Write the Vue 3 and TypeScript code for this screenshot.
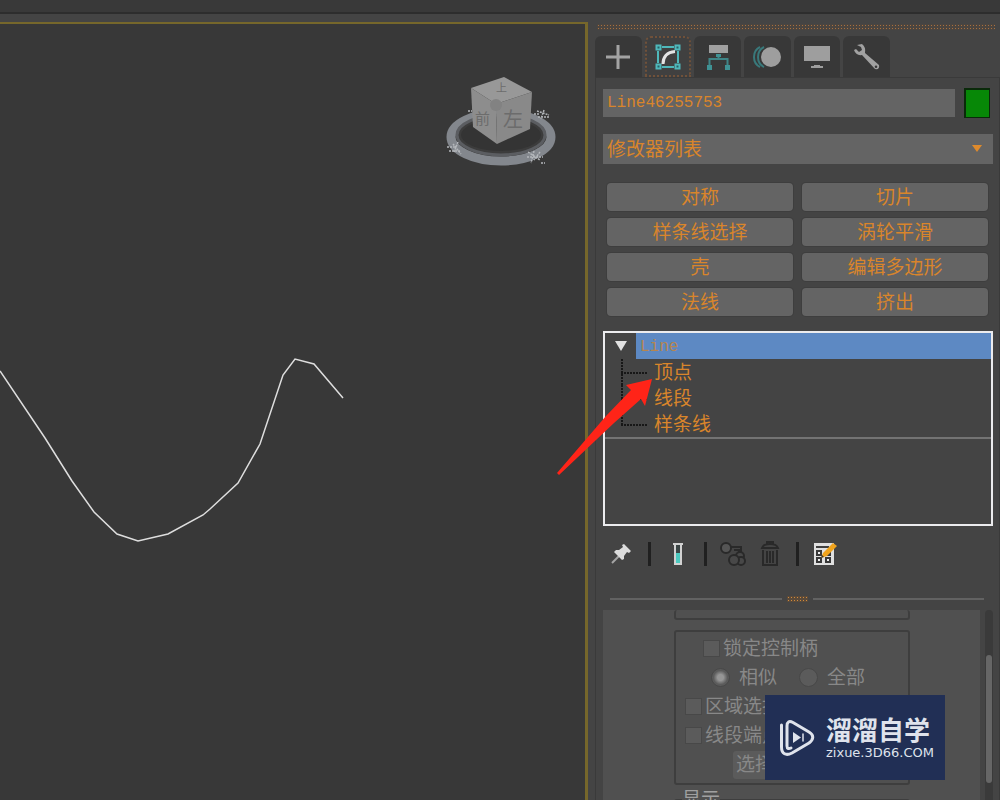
<script setup lang="ts">
import { ref } from 'vue'

const objectName = ref('Line46255753')
const activeTab = ref('modify')
const lockHandles = ref(false)
const areaSelect = ref(false)
const segmentEnd = ref(false)
const handleMode = ref('alike')

const tabs = [
  { id: 'create', label: '创建' },
  { id: 'modify', label: '修改' },
  { id: 'hierarchy', label: '层次' },
  { id: 'motion', label: '运动' },
  { id: 'display', label: '显示' },
  { id: 'utilities', label: '实用程序' },
]
const modifiers = ['对称', '切片', '样条线选择', '涡轮平滑', '壳', '编辑多边形', '法线', '挤出']
const subObjects = ['顶点', '线段', '样条线']
</script>

<template>
  <div class="app">
    <div class="topbar"></div>
    <div class="workspace">
      <main class="viewport">
        <svg class="scene" width="585" height="776" viewBox="0 24 585 776" aria-hidden="true">
          <polyline
            points="0,371 45,438 72,481 94,512 117,534 138,541 168,534 203,515 210,509 238,483 260,444 283,375 295,359 314,364 343,398"
            fill="none" stroke="#dedede" stroke-width="1.5" />
          <ellipse cx="501" cy="137" rx="50" ry="24" fill="none" stroke="#83878d" stroke-width="9" />
          <ellipse cx="501" cy="135" rx="44" ry="20" fill="#3c3c3c" stroke="#5b5d61" stroke-width="3" />
          <ellipse cx="501" cy="135" rx="40" ry="16" fill="#343434" />
          <path d="M471 88L504 77L532 92L496 104Z" fill="#989898" />
          <path d="M471 88L496 104L497 144L473 127Z" fill="#8d8d8d" />
          <path d="M496 104L532 92L530 129L497 144Z" fill="#898989" />
          <circle cx="496" cy="105" r="6" fill="#828282" />
          <text x="496" y="92" class="face small">上</text>
          <text x="475" y="124" class="face">前</text>
          <text x="503" y="127" class="face big">左</text>
          <g stroke="#b4b7bb" stroke-width="1.5" stroke-dasharray="2 1" fill="none">
            <path d="M447 147h8M449 151h12M453 144l8 10M458 142l-4 10M468 111h4" />
            <path d="M528 152l12 8M527 157h16M534 151l-3 12M540 152l-6 8M541 163h4" />
            <path d="M537 111l12 4M538 117h12M544 110l-3 9M534 114h6" />
          </g>
        </svg>
      </main>

      <aside class="panel">
        <div class="grip"></div>
        <nav class="tabs">
          <button v-for="tab in tabs" :key="tab.id" type="button" class="tab" :class="{ active: activeTab === tab.id }"
            :aria-label="tab.label" @click="activeTab = tab.id">
            <svg v-if="tab.id === 'create'" width="26" height="26" viewBox="0 0 26 26">
              <path d="M13 1v24M1 13h24" stroke="#a3a3a3" stroke-width="3" />
            </svg>
            <svg v-else-if="tab.id === 'modify'" width="28" height="28" viewBox="0 0 28 28" fill="none">
              <path d="M8 4h12M8 24h12M4 8v12M24 8v12" stroke="#4fb8bb" stroke-width="2" />
              <path d="M2.500 2.500h4v4h-4zM21.500 2.500h4v4h-4zM2.500 21.500h4v4h-4zM21.500 21.500h4v4h-4z" fill="#286064"
                stroke="#4fb8bb" stroke-width="2" />
              <path d="M9 21C9 14 13 9 21 8.500" stroke="#e4e4e4" stroke-width="3" />
            </svg>
            <svg v-else-if="tab.id === 'hierarchy'" width="26" height="28" viewBox="0 0 26 28">
              <path d="M4 2h19v8H4z" fill="#a0a0a0" />
              <path d="M13.500 12v4M4.500 22v-6h18v6" fill="none" stroke="#3f8587" stroke-width="2" />
              <path d="M11 11h5v3h-5zM2 22h5v5H2zM20 22h5v5h-5z" fill="#3f9294" />
            </svg>
            <svg v-else-if="tab.id === 'motion'" width="30" height="24" viewBox="0 0 30 24">
              <g fill="none" stroke="#39797b" stroke-width="2">
                <path d="M8 2C0 6 0 18 8 22" />
                <path d="M12 2C4 6 4 18 12 22" />
              </g>
              <circle cx="19" cy="12" r="10" fill="#9e9e9e" />
            </svg>
            <svg v-else-if="tab.id === 'display'" width="26" height="26" viewBox="0 0 26 26" fill="#9e9e9e">
              <path d="M0 2h26v15H0zM10 21h6v1h3v2H7v-2h3z" />
            </svg>
            <svg v-else width="28" height="28" viewBox="0 0 28 28">
              <path fill="#a1a1a1" fill-rule="evenodd"
                d="M4 2L9 1Q13 4 12 10L26 22Q27 27 22 26L9 12Q3 13 1 7L3 6L6 9L9 7L8 4ZM23 22.500A1.300 1.300 0 1 0 23 25.100A1.300 1.300 0 1 0 23 22.500Z" />
            </svg>
          </button>
        </nav>

        <section class="body">
          <div class="name-row">
            <input v-model="objectName" class="name" type="text" aria-label="对象名称" />
            <button type="button" class="swatch" aria-label="对象颜色"></button>
          </div>
          <div class="select-wrap">
            <select class="mod-list" aria-label="修改器">
              <option>修改器列表</option>
            </select>
            <svg class="caret" width="10" height="8" viewBox="0 0 10 8" aria-hidden="true">
              <path d="M0 1h10L5 8z" fill="#de8a2c" />
            </svg>
          </div>
          <div class="mods">
            <button v-for="name in modifiers" :key="name" type="button" class="mod">{{ name }}</button>
          </div>

          <div class="stack-wrap">
            <div class="stack">
              <div class="stack-head">
                <button type="button" class="toggle" aria-label="折叠">
                  <svg width="12" height="10" viewBox="0 0 12 10"><path d="M0 0h12L6 10z" fill="#e2e2e2" /></svg>
                </button>
                <span class="stack-name">Line</span>
              </div>
              <ul class="subs">
                <li v-for="item in subObjects" :key="item">{{ item }}</li>
              </ul>
            </div>
            <svg class="pointer" width="98" height="98" viewBox="556 378 98 98" aria-hidden="true">
              <path d="M557 473L606 416L631 390L626 385L652 379L645 406L641 399L614 423L559 475Z" fill="#ff2418" />
            </svg>
          </div>

          <div class="tools">
            <button type="button" class="tool" aria-label="锁定堆栈">
              <svg width="22" height="22" viewBox="0 0 22 22">
                <path d="M2 20l8-8" stroke="#a5a5a5" stroke-width="2" />
                <path d="M14 1l7 7-2 2-2-1-3 4 0 3-2 1-8-8 2-2 3 0 4-3-1-2z" fill="#dcdcdc" />
              </svg>
            </button>
            <i class="bar"></i>
            <button type="button" class="tool wide" aria-label="显示最终结果">
              <svg width="14" height="24" viewBox="0 0 14 24">
                <path d="M2 2h10M4 3v19h6V3" fill="#3b4545" stroke="#d2d2d2" stroke-width="2" />
                <path d="M5 11h4v10H5z" fill="#4ccac0" />
              </svg>
            </button>
            <i class="bar"></i>
            <button type="button" class="tool" aria-label="使唯一">
              <svg width="26" height="26" viewBox="0 0 26 26" fill="#484848" stroke="#292929" stroke-width="2">
                <path d="M11 6h10v5M14 9h5v4" fill="none" />
                <circle cx="6" cy="7" r="5" fill="#555" />
                <circle cx="20" cy="15" r="4" />
                <circle cx="21" cy="20" r="4" />
                <circle cx="14" cy="19" r="5" />
              </svg>
            </button>
            <button type="button" class="tool" aria-label="移除修改器">
              <svg width="20" height="26" viewBox="0 0 20 26" fill="none" stroke="#292929" stroke-width="2">
                <path d="M2 7C3 4 5 3 10 3s7 1 8 4zM7 3V1h6v2M3 9v15h14V9M7 10v12M10 10v12M13 10v12" />
              </svg>
            </button>
            <i class="bar"></i>
            <button type="button" class="tool" aria-label="配置修改器集">
              <svg width="24" height="24" viewBox="0 0 24 24">
                <path d="M1 1h20v22H1z" fill="#e0e0e0" />
                <path d="M3 5h13" stroke="#404040" stroke-width="2" />
                <path d="M4 9h4v4H4zM4 16h4v4H4zM13 16h4v4h-4zM13 11h4v2h-4z" fill="#eee" stroke="#383838" stroke-width="2" />
                <path d="M8 16l2-5L20 1l4 3-10 10z" fill="#f0a31c" />
                <path d="M8 16l1-3 2 2z" fill="#333" />
              </svg>
            </button>
          </div>
          <div class="splitter"><i class="rule"></i><i class="nub"></i><i class="rule"></i></div>

          <div class="rollout">
            <div class="content">
              <div class="group first"></div>
              <div class="group">
                <div class="line lock">
                  <label><input v-model="lockHandles" type="checkbox" />锁定控制柄</label>
                </div>
                <div class="line modes">
                  <label><input v-model="handleMode" type="radio" name="mode" value="alike" />相似</label>
                  <label><input v-model="handleMode" type="radio" name="mode" value="all" />全部</label>
                </div>
                <div class="line"><label><input v-model="areaSelect" type="checkbox" />区域选择</label></div>
                <div class="line"><label><input v-model="segmentEnd" type="checkbox" />线段端点</label></div>
                <div class="line pick"><button type="button">选择方式</button></div>
              </div>
              <fieldset class="group last"><legend>显示</legend></fieldset>
            </div>
            <div class="track"><div class="thumb"></div></div>
          </div>
        </section>
      </aside>
    </div>

    <div class="watermark">
      <svg width="36" height="38" viewBox="0 0 36 38" fill="none" stroke="#dfe3ec" stroke-linecap="round"
        stroke-linejoin="round" aria-hidden="true">
        <path d="M2.500 6v22C2.500 35 7 37 13 34L30 24C35 20 35 16 30 13L14 3.500C10 1.500 8 3 8 7V27C8 30 10 30 12 29"
          stroke-width="3" />
        <path d="M14 13v11l8-5.500z" fill="#dfe3ec" stroke="none" />
        <path d="M24 15v7" stroke-width="1.500" />
      </svg>
      <div class="brand">
        <strong>溜溜自学</strong>
        <span>zixue.3D66.COM</span>
      </div>
    </div>
  </div>
</template>

<style>
body {
  background: #444;
}
</style>

<style scoped>
.app {
  position: relative;
  display: flex;
  flex-direction: column;
  height: 100vh;
  overflow: hidden;
  background: #444;
  color: #d9852b;
  font: 19px/26px "Liberation Sans", "Noto Sans CJK SC", sans-serif;
}
.app * {
  box-sizing: border-box;
}
button,
input,
select {
  margin: 0;
  padding: 0;
  border: 0;
  border-radius: 0;
  color: inherit;
  font: inherit;
  appearance: none;
}
svg {
  display: block;
  flex: none;
}
.topbar {
  flex: none;
  height: 14px;
  background: #393939;
  border-bottom: 2px solid #2d2d2d;
}
.workspace {
  display: flex;
  flex: 1;
  min-height: 0;
}
.viewport {
  flex: 1;
  min-width: 0;
  margin-top: 8px;
  overflow: hidden;
  background: #383838;
  border-top: 2px solid #76672b;
  border-right: 3px solid #76672b;
}
.face {
  fill: #6c6c6c;
  font-size: 15px;
}
.face.small {
  font-size: 11px;
}
.face.big {
  font-size: 20px;
}
.panel {
  display: flex;
  flex: none;
  flex-direction: column;
  width: 412px;
  padding: 10px 0 0 7px;
}
.grip {
  flex: none;
  height: 6px;
  margin: 0 5px 6px 2px;
  background: radial-gradient(circle, #a8703e 1px, #4b4540 1px) 0 0 / 3px 3px;
}
.tabs {
  display: grid;
  flex: none;
  grid-template-columns: repeat(6, 1fr);
  gap: 3px;
  width: 295px;
  height: 41px;
}
.tab {
  display: flex;
  align-items: center;
  justify-content: center;
  background: #383838;
  border-radius: 6px 6px 0 0;
}
.tab.active {
  background: #404040;
  border: 2px dotted #70513a;
}
.body {
  display: flex;
  flex: 1;
  flex-direction: column;
  min-height: 0;
  padding: 10px 6px 0 7px;
  border: solid #3a3a3a;
  border-width: 1px 1px 0;
}
.name-row {
  display: flex;
  flex: none;
  align-items: center;
  gap: 9px;
  height: 30px;
  padding-right: 3px;
}
.name {
  flex: 1;
  min-width: 0;
  height: 28px;
  padding: 0 4px;
  background: #646464;
  font: 16px/28px "Liberation Mono", monospace;
}
.swatch {
  width: 26px;
  height: 30px;
  background: #078807;
  border: 1px solid #0a2a0a;
  border-width: 2px 1px 1px 2px;
}
.select-wrap {
  position: relative;
  flex: none;
  height: 30px;
  margin-top: 16px;
}
.mod-list {
  display: block;
  width: 100%;
  height: 30px;
  padding: 2px 4px 0;
  background: #646464;
}
.caret {
  position: absolute;
  top: 10px;
  right: 11px;
  pointer-events: none;
}
.mods {
  display: grid;
  flex: none;
  grid-template-columns: 1fr 1fr;
  gap: 7px 9px;
  margin-top: 19px;
  padding: 0 5px 0 4px;
}
.mod {
  height: 28px;
  padding-top: 2px;
  background: #646464;
  border-radius: 4px;
  box-shadow: 0 0 0 1px #3e3e3e;
}
.stack-wrap {
  position: relative;
  flex: none;
  margin-top: 15px;
}
.stack {
  height: 195px;
  border: 2px solid #ececee;
}
.stack-head {
  display: flex;
  height: 26px;
}
.toggle {
  display: flex;
  align-items: center;
  justify-content: center;
  width: 31px;
  background: none;
}
.stack-name {
  flex: 1;
  padding-left: 4px;
  background: #5d89c3;
  color: #b5854f;
  font: 16px/28px "Liberation Mono", monospace;
}
.subs {
  margin: 0;
  padding: 0 0 0 16px;
  list-style: none;
  border-bottom: 2px solid #737373;
}
.subs li {
  display: flex;
  align-items: center;
  height: 26px;
  padding-top: 2px;
  background: repeating-linear-gradient(#171717 0 2px, transparent 2px 3px) 0 0 / 2px 100% no-repeat;
}
.subs li:last-child {
  background-size: 2px 14px;
}
.subs li::before {
  width: 26px;
  height: 2px;
  margin-right: 7px;
  background: repeating-linear-gradient(90deg, #171717 0 2px, transparent 2px 3px);
  content: "";
}
.pointer {
  position: absolute;
  top: 47px;
  left: -47px;
  z-index: 2;
  pointer-events: none;
}
.tools {
  display: flex;
  flex: none;
  align-items: center;
  height: 36px;
  margin-top: 10px;
  padding-left: 3px;
}
.tool {
  display: flex;
  align-items: center;
  justify-content: center;
  width: 37px;
  background: none;
}
.tool:first-child {
  width: 29px;
  margin-right: 13px;
}
.tool.wide {
  width: 53px;
}
.bar {
  width: 3px;
  height: 24px;
  background: #202020;
}
.bar + .tool:not(.wide) {
  margin-left: 7px;
}
.tool + .tool + .bar {
  margin-left: 8px;
}
.splitter {
  display: flex;
  flex: none;
  align-items: center;
  gap: 5px;
  height: 10px;
  margin: 22px 9px 6px 7px;
}
.rule {
  flex: 1;
  height: 2px;
  background: #626262;
}
.nub {
  width: 21px;
  height: 6px;
  background: radial-gradient(circle, #d08a3c 1px, #5a4a3a 1px) 0 0 / 3px 3px;
}
.rollout {
  display: flex;
  flex: 1;
  gap: 5px;
  min-height: 0;
}
.content {
  flex: 1;
  padding: 0 70px 0 71px;
  overflow: hidden;
  background: #505050;
  color: #888;
}
.group {
  margin: 0;
  padding: 2px 10px 4px 9px;
  border: 2px solid #3e3e3e;
  border-radius: 3px;
}
.group.first {
  height: 10px;
  margin-bottom: 10px;
  border-top: 0;
}
.group.last {
  height: 60px;
  margin-top: 2px;
  padding: 0 6px;
}
legend {
  padding: 0;
  color: #a0a0a0;
}
.line {
  display: flex;
  align-items: center;
  height: 29px;
}
.line label {
  display: flex;
  align-items: center;
  white-space: nowrap;
}
.line input {
  width: 17px;
  height: 17px;
  margin-right: 3px;
  background: #5b5b5b;
  border: 1px solid #484848;
}
.lock {
  padding-left: 18px;
}
.modes {
  gap: 22px;
  padding-left: 26px;
}
.modes input {
  width: 19px;
  height: 19px;
  margin-right: 9px;
  border-radius: 50%;
}
.modes input:checked {
  background: radial-gradient(circle, #969696 3px, #5b5b5b 7px);
}
.pick {
  padding-left: 48px;
}
.pick button {
  width: 120px;
  height: 28px;
  padding-left: 3px;
  background: #5b5b5b;
  border-radius: 3px;
  text-align: left;
}
.track {
  width: 8px;
  padding: 45px 1px 17px;
  background: #3a3a3a;
  border-radius: 4px 4px 0 0;
}
.thumb {
  height: 100%;
  background: #666;
  border-radius: 3px;
}
.watermark {
  position: absolute;
  right: 55px;
  bottom: 20px;
  z-index: 3;
  display: flex;
  align-items: center;
  gap: 11px;
  width: 180px;
  height: 85px;
  padding-left: 14px;
  background: #212f55;
  color: #dfe3ec;
}
.brand {
  display: flex;
  flex-direction: column;
}
.brand strong {
  font-size: 26px;
  font-weight: 700;
  line-height: 30px;
}
.brand span {
  font: 13px/14px "DejaVu Sans", sans-serif;
}
</style>
